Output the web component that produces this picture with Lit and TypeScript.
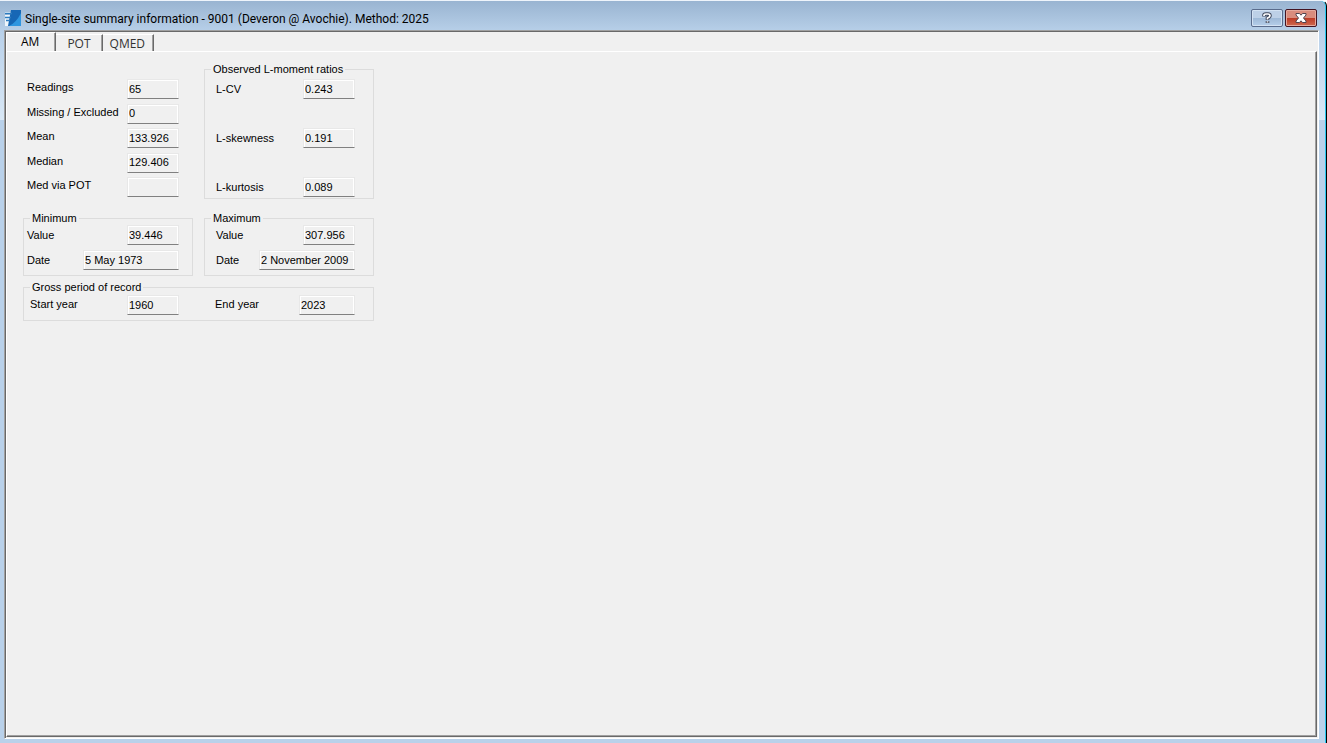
import { LitElement, html, css } from "lit";
import { customElement, state } from "lit/decorators.js";

@customElement("read-field")
class ReadField extends LitElement {
  static properties = { label: {}, value: {}, size: {} };
  declare label: string;
  declare value: string;
  declare size: string;

  static styles = css`
    :host { display: block; }
    .row { display: flex; align-items: center; justify-content: space-between; height: 20px; }
    label { white-space: nowrap; padding-bottom: var(--label-rise, 0); }
    input {
      box-sizing: border-box; width: 52px; height: 20px; margin: 0; padding: 0 1px 1px;
      border: 1px solid; border-color: #e8e8e8 #e8e8e8 #808080 #e8e8e8;
      box-shadow: inset 1px 1px #fff, inset -1px 0 #fff;
      border-radius: 0; outline: none; background: #f0f0f0; color: #000; font: inherit;
    }
    .medium { width: 56px; }
    .wide { width: 96px; }
  `;

  render() {
    return html`<div class="row">
      <label for="v">${this.label}</label>
      <input id="v" class=${this.size || "small"} type="text" readonly .value=${this.value || ""}>
    </div>`;
  }
}

@customElement("app-root")
export class AppRoot extends LitElement {
  @state() tab = "AM";

  static styles = css`
    :host { display: block; height: 100vh; font: 11px/13px "Liberation Sans", Arial, sans-serif; color: #000; }
    .window {
      box-sizing: border-box; height: 100%; display: flex; flex-direction: column;
      padding: 0 7px 4px 4px;
      background: linear-gradient(#99b4d1, #b9d1ea 32px, #d9e8f6 119px, #b9d1ea 119px);
      border-top: 1px solid #eef4fb; border-right: 1px solid #000; border-top-right-radius: 6px;
      box-shadow: inset -1px 0 #28c8f0;
    }
    .title { height: 29px; display: flex; align-items: center; gap: 4px; }
    .title svg { display: block; }
    .title .logo { margin-top: 4px; }
    h1 { flex: 1; margin: 6px 0 0; font: 12px/16px Roboto, "Noto Sans", sans-serif; white-space: nowrap; }
    .buttons { display: flex; gap: 2px; margin-top: 4px; padding-right: 2px; }
    .caption {
      box-sizing: border-box; width: 32px; height: 18px; padding: 0; display: grid; place-items: center;
      border: 1px solid #5a6c8c; border-radius: 2px; box-shadow: inset 0 0 0 1px #d3e2f3;
      background: linear-gradient(#bdd0e7 50%, #9db8d6 50%, #b6cfea);
    }
    .close { border-color: #431422; box-shadow: inset 0 0 0 1px #e5a99d; background: linear-gradient(#d98c7d 50%, #bc3a25 50%, #cf6a50); }
    .client {
      flex: 1; display: flex; flex-direction: column; background: #f0f0f0;
      border: 1px solid; border-color: #a0a0a0 #fff #fff #a0a0a0; box-shadow: inset 1px 1px #696969;
      padding: 1px;
    }
    .tabs { display: flex; align-items: flex-end; height: 19px; }
    .tab {
      box-sizing: border-box; height: 17px; margin: 0; padding: 1px 11px 0; border: 0;
      border-right: 1px solid #696969; border-top: 1px solid #fff; box-shadow: inset -1px 0 #a0a0a0;
      background: #f0f0f0; font: 12px/15px "Open Sans", "Noto Sans", sans-serif; color: #333;
    }
    .tab:last-child { padding: 1px 8px 0 7px; }
    .tab.active { height: 19px; padding: 0 16px 1px 14px; border-left: 1px solid #fff; color: #000; }
    .page {
      flex: 1; padding: 11px 17px 11px 16px; border: 1px solid; border-color: #fff #696969 #696969 #fff;
      box-shadow: inset -1px -1px #a0a0a0;
    }
    .grid { display: grid; grid-template-columns: 170px 170px; column-gap: 11px; row-gap: 13px; justify-content: start; }
    .stats { display: flex; flex-direction: column; justify-content: space-between; padding: 16px 14px 2px 4px; --label-rise: 3px; }
    fieldset { box-sizing: border-box; min-width: 0; margin: 0; padding: 0 18px 1px 11px; border: 1px solid #dcdcdc; }
    legend { margin-left: -5px; padding: 0 2px; height: 13px; white-space: nowrap; }
    .moments { display: flex; flex-direction: column; gap: 29px; margin-top: 3px; }
    .left { padding: 0 13px 5px 3px; }
    .left legend { margin-left: 3px; }
    .right { padding-bottom: 5px; }
    .pair { display: flex; flex-direction: column; gap: 5px; }
    .period { grid-column: 1 / 3; padding: 0 18px 5px 6px; margin-top: -8px; --label-rise: 2px; }
    .period legend { margin-left: 0; }
    .years { display: grid; grid-template-columns: 149px 140px; justify-content: space-between; margin-top: 1px; }
  `;

  render() {
    const tabs = ["AM", "POT", "QMED"];
    return html`<main class="window">
      <header class="title">
        <svg class="logo" width="17" height="16" viewBox="0 0 17 16">
          <path d="M1 2h7v1H1zM1 5h7v11H1z" fill="#eef6fc"/>
          <path d="M7 0h10v16H4z" fill="#1767b5"/>
          <path d="M17 3v13H5q7-3 12-13z" fill="#2f96e0"/>
          <path d="M1 3.500h7M1 7.500h6M2 10.500h4" stroke="#2c7cc0" stroke-width="1.500"/>
        </svg>
        <h1>Single-site summary information - 9001 (Deveron @ Avochie). Method: 2025</h1>
        <div class="buttons">
          <button class="caption" aria-label="Help">
            <svg width="10" height="12" viewBox="0 0 10 12"><path d="M2 4.500V3.500Q2 2 4 2h2q2 0 2 1.800Q8 5 5.500 6v2M5.500 9v2" fill="none" stroke="#3f475c" stroke-width="3.600"/><path d="M2 4V3.500Q2 2 4 2h2q2 0 2 1.800Q8 5 5.500 6v1.500M5.500 9.200v1.300" fill="none" stroke="#fff" stroke-width="1.700"/></svg>
          </button>
          <button class="caption close" aria-label="Close">
            <svg width="12" height="10" viewBox="0 0 12 10"><path d="M1 .5h3.500L6 2.200 7.500.5H11v1.500L8.500 5 11 8v1.500H7.500L6 7.800 4.500 9.500H1V8l2.500-3L1 2z" fill="#fff" stroke="#50444f"/></svg>
          </button>
        </div>
      </header>
      <section class="client">
        <nav class="tabs" role="tablist">
          ${tabs.map(t => html`<button role="tab" aria-selected=${t === this.tab} class="tab ${t === this.tab ? "active" : ""}" @click=${() => (this.tab = t)}>${t}</button>`)}
        </nav>
        <div class="page" role="tabpanel">
          <div class="grid">
            <div class="stats">
              <read-field label="Readings" value="65"></read-field>
              <read-field label="Missing / Excluded" value="0"></read-field>
              <read-field label="Mean" value="133.926"></read-field>
              <read-field label="Median" value="129.406"></read-field>
              <read-field label="Med via POT"></read-field>
            </div>
            <fieldset>
              <legend>Observed L-moment ratios</legend>
              <div class="moments">
                <read-field label="L-CV" value="0.243"></read-field>
                <read-field label="L-skewness" value="0.191"></read-field>
                <read-field label="L-kurtosis" value="0.089"></read-field>
              </div>
            </fieldset>
            <fieldset class="left">
              <legend>Minimum</legend>
              <div class="pair">
                <read-field label="Value" value="39.446"></read-field>
                <read-field label="Date" value="5 May 1973" size="wide"></read-field>
              </div>
            </fieldset>
            <fieldset class="right">
              <legend>Maximum</legend>
              <div class="pair">
                <read-field label="Value" value="307.956"></read-field>
                <read-field label="Date" value="2 November 2009" size="wide"></read-field>
              </div>
            </fieldset>
            <fieldset class="period">
              <legend>Gross period of record</legend>
              <div class="years">
                <read-field label="Start year" value="1960"></read-field>
                <read-field label="End year" value="2023" size="medium"></read-field>
              </div>
            </fieldset>
          </div>
        </div>
      </section>
    </main>`;
  }
}
